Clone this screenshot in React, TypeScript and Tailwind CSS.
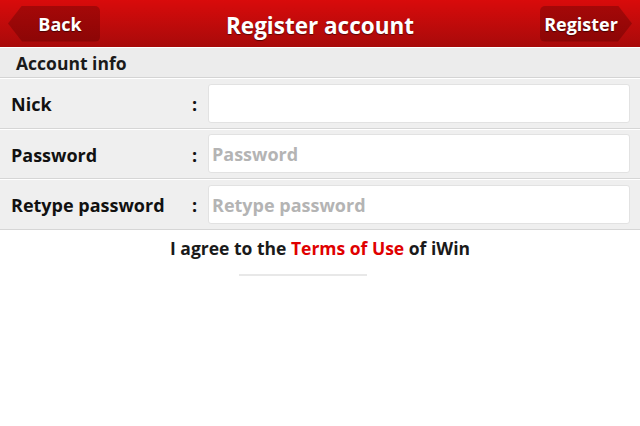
import React from "react";

const rows = [
  { label: "Nick", placeholder: "" },
  { label: "Password", placeholder: "Password" },
  { label: "Retype password", placeholder: "Retype password" },
];

export default function App() {
  return (
    <div
      className="w-[640px] h-[426px] bg-white overflow-hidden"
      style={{ fontFamily: '"Open Sans", "DejaVu Sans", sans-serif' }}
    >
      {/* header */}
      <div className="h-[47px] flex items-center justify-between px-[8px] bg-gradient-to-b from-[#d90b0b] to-[#a80a0a]">
        <button className="w-[92px] h-[36px] text-white font-bold text-[18px] [clip-path:polygon(14px_0,100%_0,100%_100%,14px_100%,0_50%)] bg-gradient-to-b from-[#a50808] to-[#8c0606] rounded-r-[5px] pl-[12px] pt-[2px] [text-shadow:0_1px_1px_rgba(0,0,0,0.5)]">
          Back
        </button>
        <h1 className="text-white font-bold text-[22.5px] pt-[4px] [text-shadow:0_1px_1px_rgba(0,0,0,0.5)]">
          Register account
        </h1>
        <button className="w-[92px] h-[36px] text-white font-bold text-[18px] [clip-path:polygon(0_0,calc(100%-14px)_0,100%_50%,calc(100%-14px)_100%,0_100%)] bg-gradient-to-b from-[#a50808] to-[#8c0606] rounded-l-[5px] pr-[10px] pt-[2px] [text-shadow:0_1px_1px_rgba(0,0,0,0.5)]">
          Register
        </button>
      </div>

      {/* section header */}
      <div className="h-[31px] border-t border-white bg-[#ececec] border-b border-b-[#d4d4d4] flex items-center pl-[16px] pt-[2px]">
        <span className="font-bold text-[17.5px] text-[#1a1a1a]">Account info</span>
      </div>

      {rows.map((r) => (
        <div
          key={r.label}
          className="h-[50.5px] bg-[#efefef] border-t border-white border-b border-b-[#d6d6d6] flex items-center"
        >
          <div className="w-[192px] pl-[11px] pt-[3px] font-bold text-[18px] text-[#111]">{r.label}</div>
          <div className="w-[16px] pt-[3px] font-bold text-[18px] text-[#111]">:</div>
          <div className="flex-1 mr-[10px] h-[39px] bg-white border border-[#e2e2e2] rounded-[3px] flex items-center pl-[3px] pt-[2px]">
            <span className="font-bold text-[18px] text-[#b4b4b4]">{r.placeholder}</span>
          </div>
        </div>
      ))}

      {/* agreement */}
      <div className="flex flex-col items-center pt-[5px]">
        <p className="font-bold text-[17.5px] text-[#1a1a1a]">
          I agree to the <span className="text-[#e00000]">Terms of Use</span> of iWin
        </p>
        <div className="mt-[13px] mr-[34px] w-[128px] h-[2px] bg-[#e8e8e8]" />
      </div>
    </div>
  );
}
